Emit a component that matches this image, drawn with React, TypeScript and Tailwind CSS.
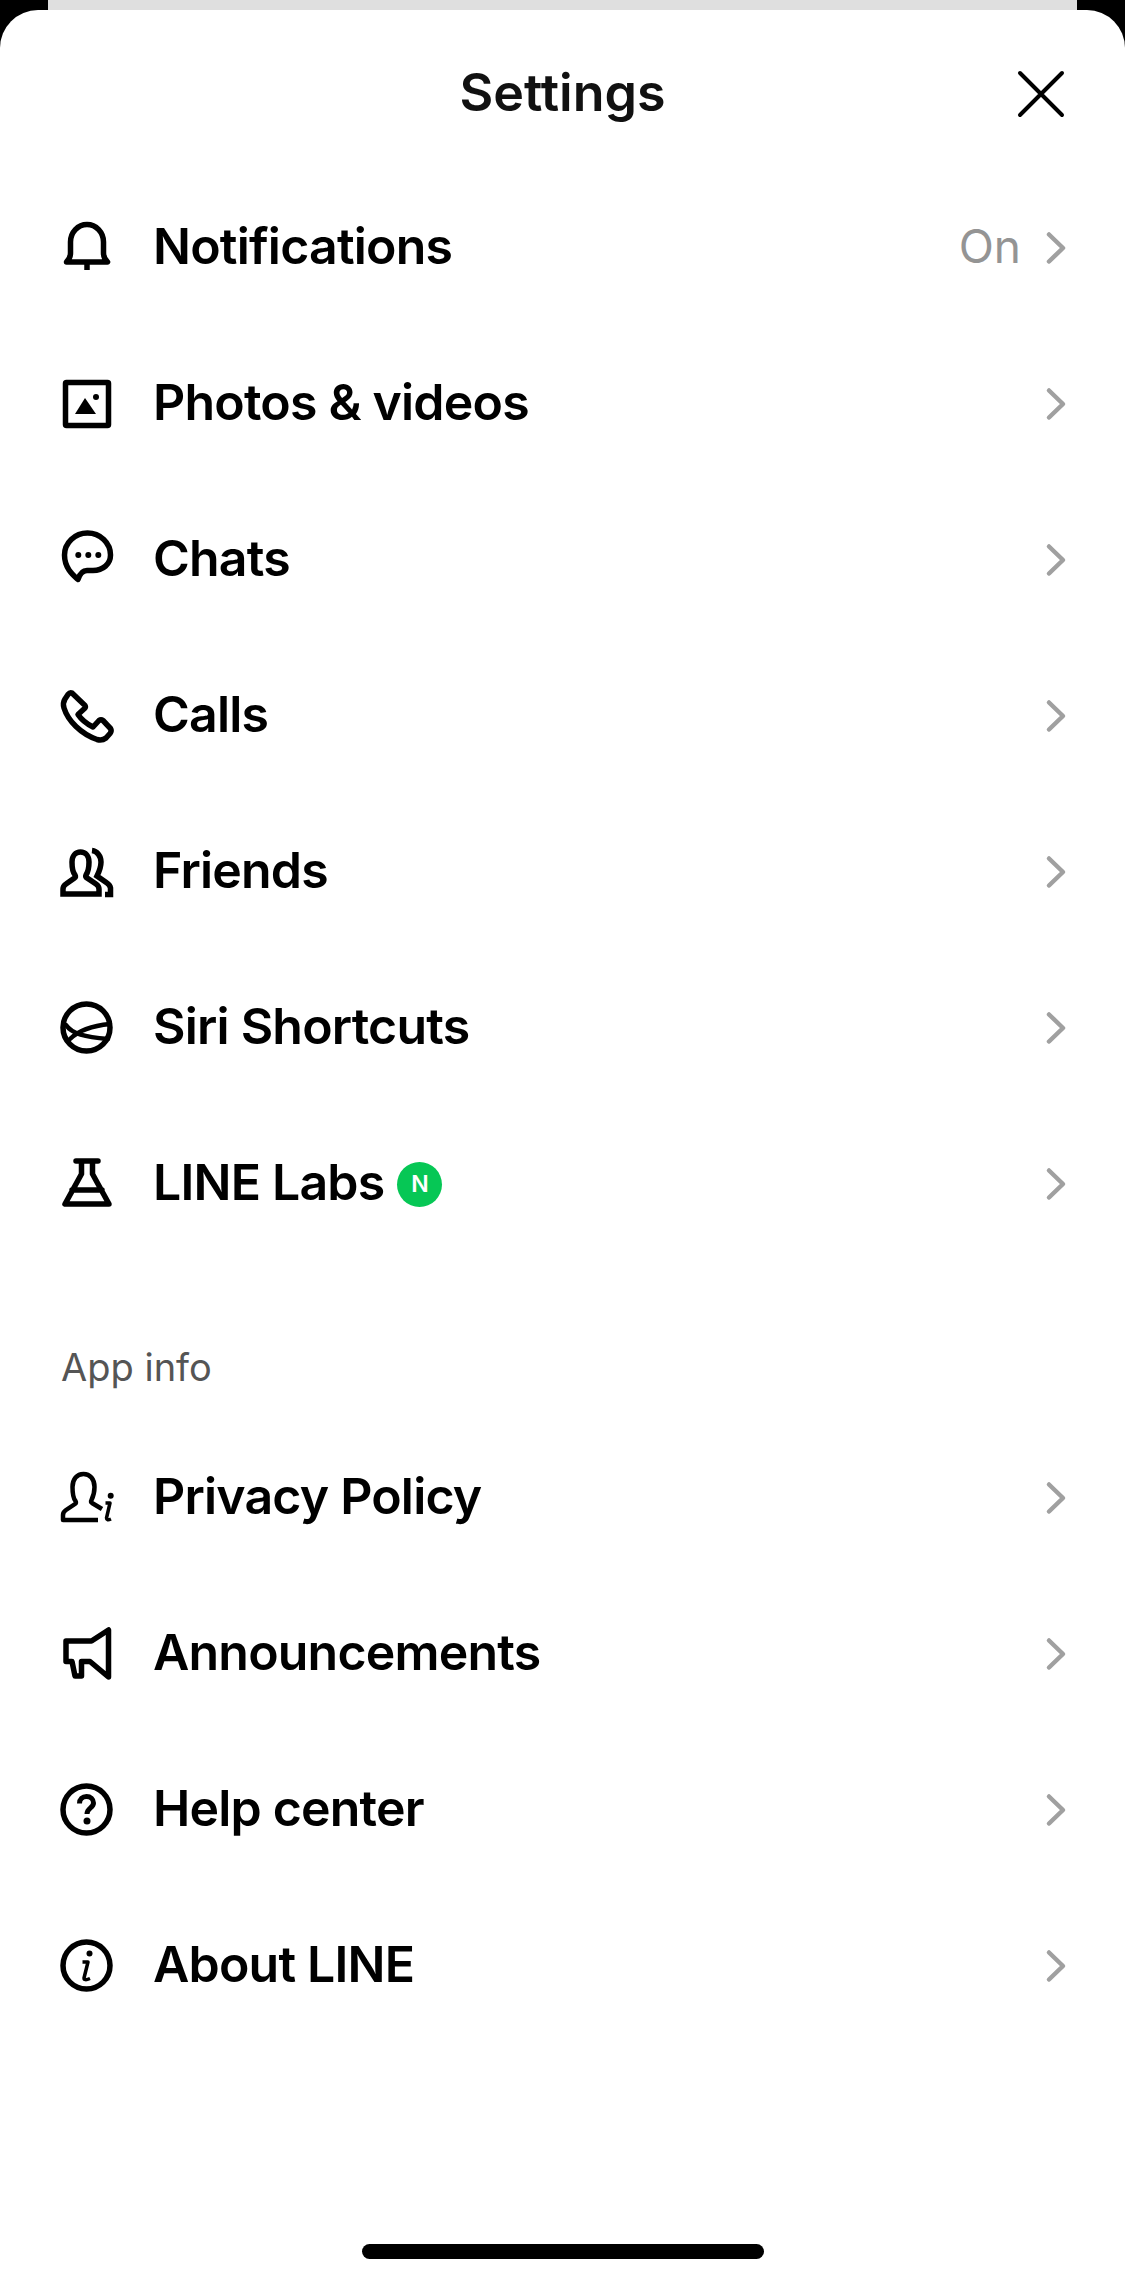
import { ReactNode } from "react";

const Icon = ({ children }: { children: ReactNode }) => (
  <svg
    viewBox="0 0 60 60"
    fill="none"
    stroke="black"
    strokeWidth={5.5}
    strokeLinejoin="round"
    strokeLinecap="round"
    className="h-[60px] w-[60px] shrink-0"
  >
    {children}
  </svg>
);

const BellIcon = () => (
  <Icon>
    <path d="M9.5 44 C12.5 41 13.5 39 13.5 35 V24 a16.5 17.5 0 0 1 33 0 V35 c0 4 1 6 4 9 Z" />
    <path d="M30 44 V52" strokeLinecap="butt" />
  </Icon>
);

const PhotoIcon = () => (
  <Icon>
    <rect x="8.5" y="8.5" width="43" height="43" rx="1" />
    <path d="M18 40 L28 24 L39 40 Z" fill="black" stroke="none" />
    <circle cx="39" cy="23" r="3" fill="black" stroke="none" />
  </Icon>
);

const ChatIcon = () => (
  <Icon>
    <path d="M21 49.5 C16 45 7.5 38 7.5 25 A23 22 0 0 1 53.5 25 C53.5 34 46 40.5 36 40.5 H30 C26 40.5 23 43 21 49.5 Z" />
    <circle cx="21.3" cy="25" r="3" fill="black" stroke="none" />
    <circle cx="31.3" cy="25" r="3" fill="black" stroke="none" />
    <circle cx="41.3" cy="25" r="3" fill="black" stroke="none" />
  </Icon>
);

const PhoneIcon = () => (
  <Icon>
    <path d="M15 7 L28 19.5 Q29 21 27.5 22.5 L21 28.5 Q26 36 36 41 L42 34.5 Q44 33 46 34.5 L53.5 42.5 Q55 45 53 47.5 L49 52 Q45 55 40 53.5 C24 48 11 35 7 22 Q5.5 17 8 13 L11 8.5 Q13 6 15 7 Z" />
  </Icon>
);

const FriendsIcon = () => (
  <Icon>
    <path d="M6 52 V47 Q6 44 9 42 L17.5 36 Q19 35 18 33 C15.5 30 15 26 15 20 C15 14 18.5 10 23.5 10 C28.5 10 32 14 32 20 C32 26 31 30 29 33 Q28 35 30 36 L39 42 Q42 44 42 47 V52 Z" strokeLinejoin="miter" />
    <path d="M35 8.5 C40 9 44 14 44 20 C44 26 42 30 40 34 L50 41 Q53 43 53.5 46 V52.5 H48" strokeLinecap="butt" strokeLinejoin="miter" />
  </Icon>
);

const SiriIcon = () => (
  <Icon>
    <circle cx="29.5" cy="29.5" r="23.5" />
    <path d="M9 27 C15 36 28 39 51 41" strokeWidth={4.5} />
    <path d="M13 41 C21 33 33 28 53 26" strokeWidth={4.5} />
  </Icon>
);

const FlaskIcon = () => (
  <Icon>
    <path d="M19 7 H41 M24.5 7 V20 L8 50 H52 L35.5 20 V7 M15 36 H45" />
  </Icon>
);

const PrivacyIcon = () => (
  <Icon>
    <path
      d="M41 52 H6 V47 Q6 44 9 42 L18 36 Q19.5 35 18.5 33 C16 30 15.5 26 15.5 19 C15.5 11 20 6 26.5 6 C33 6 37.5 11 37.5 19 C37.5 24 36 29 34.5 32 Q33.5 34 35 35 L45 41"
      strokeWidth={4.5}
      strokeLinecap="butt"
    />
    <circle cx="53.7" cy="27.7" r="3" fill="black" stroke="none" />
    <path d="M48.5 35 H53 L49.5 50 Q49.5 53 54 51" strokeWidth={3.5} strokeLinecap="butt" />
  </Icon>
);

const MegaphoneIcon = () => (
  <Icon>
    <path d="M9 17 H34.5 L51.5 6 V53 L33 37.5 H24.5 V52 H18 L15 37.5 H9 Z" />
  </Icon>
);

const HelpIcon = () => (
  <Icon>
    <circle cx="29.5" cy="29.5" r="23.5" />
    <path d="M22.5 23.5 C22.5 19 25.5 16.5 29.5 16.5 C33.5 16.5 36.5 19 36.5 23 C36.5 28 30 28 30 34" strokeWidth={5} strokeLinecap="butt" />
    <circle cx="30" cy="41" r="3.5" fill="black" stroke="none" />
  </Icon>
);

const InfoIcon = () => (
  <Icon>
    <circle cx="29.5" cy="29.5" r="23.5" />
    <circle cx="32.5" cy="17.5" r="3" fill="black" stroke="none" />
    <path d="M25.5 26 H31 L27 42 Q27 45 33 42.5" strokeWidth={3.5} strokeLinecap="butt" />
  </Icon>
);

const Chevron = () => (
  <svg viewBox="0 0 24 36" fill="none" stroke="#a0a0a0" strokeWidth={4.5} strokeLinecap="round" strokeLinejoin="round" className="h-[36px] w-[24px] shrink-0">
    <path d="M5 4.5 L19 18 L5 31.5" />
  </svg>
);

const Row = ({ icon, label, value, badge }: { icon: ReactNode; label: string; value?: string; badge?: boolean }) => (
  <div className="flex h-[156px] items-center pl-[57px] pr-[57px]">
    {icon}
    <span className="mb-[3px] ml-[36px] text-[50px] font-semibold tracking-[-0.8px] text-black">{label}</span>
    {badge && (
      <span className="ml-[13px] flex h-[45px] w-[45px] items-center justify-center rounded-full bg-[#06c755] text-[23px] font-semibold text-white">
        N
      </span>
    )}
    <span className="flex-1" />
    {value && <span className="mb-[3px] mr-[23px] text-[46px] text-[#949494]">{value}</span>}
    <Chevron />
  </div>
);

export default function App() {
  return (
    <div className="h-[2284px] w-[1125px] overflow-hidden bg-black font-['Inter',sans-serif]">
      <div className="mx-[48px] h-[10px] bg-[#dfdfdf]" />
      <div className="h-[2274px] rounded-t-[38px] bg-white">
        <header className="relative flex h-[160px] items-center justify-center pt-[6px]">
          <h1 className="text-[52px] font-semibold text-[#111111]">Settings</h1>
          <svg viewBox="0 0 48 48" fill="none" stroke="black" strokeWidth={4} strokeLinecap="round" className="absolute right-[60px] top-[60px] h-[48px] w-[48px]">
            <path d="M3 3 L45 45 M45 3 L3 45" />
          </svg>
        </header>
        <Row icon={<BellIcon />} label="Notifications" value="On" />
        <Row icon={<PhotoIcon />} label="Photos & videos" />
        <Row icon={<ChatIcon />} label="Chats" />
        <Row icon={<PhoneIcon />} label="Calls" />
        <Row icon={<FriendsIcon />} label="Friends" />
        <Row icon={<SiriIcon />} label="Siri Shortcuts" />
        <Row icon={<FlaskIcon />} label="LINE Labs" badge />
        <div className="flex h-[158px] items-end pb-[24px] pl-[61px] text-[38px] text-[#555555]">App info</div>
        <Row icon={<PrivacyIcon />} label="Privacy Policy" />
        <Row icon={<MegaphoneIcon />} label="Announcements" />
        <Row icon={<HelpIcon />} label="Help center" />
        <Row icon={<InfoIcon />} label="About LINE" />
        <div className="mx-auto mt-[200px] h-[15px] w-[402px] rounded-full bg-black" />
      </div>
    </div>
  );
}
